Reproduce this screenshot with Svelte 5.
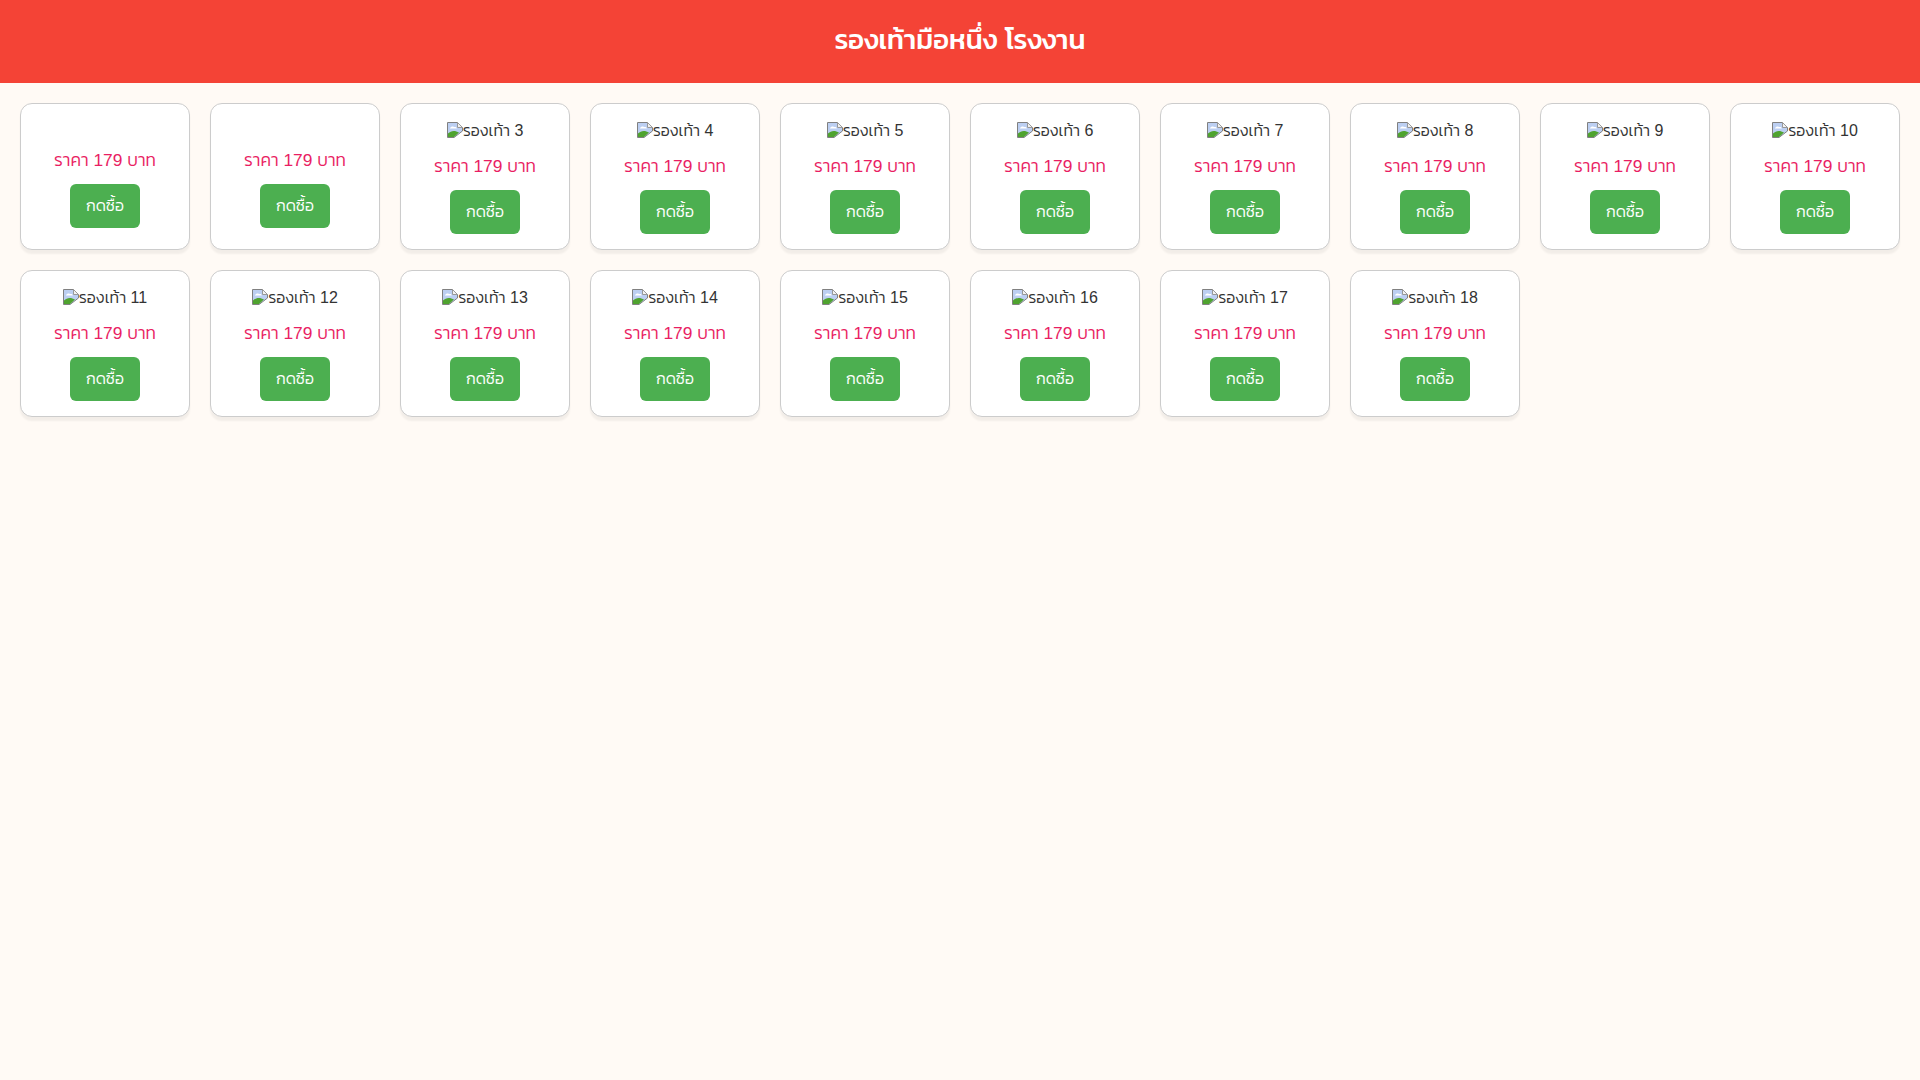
<script lang="ts">
  const shoes = Array.from({ length: 18 }, (_, i) => ({
    id: i + 1,
    // the first two pictures have no alt text showing
    blank: i < 2
  }));
</script>

<header class="header">
  <h1>รองเท้ามือหนึ่ง โรงงาน</h1>
</header>

<main class="grid">
  {#each shoes as shoe (shoe.id)}
    <article class="card">
      {#if shoe.blank}
        <div class="thumb-blank"></div>
      {:else}
        <div class="thumb">
          <svg class="broken" viewBox="0 0 16 16" width="16" height="16" aria-hidden="true">
            <path d="M0.5 15.5V0.5H10.5L15.5 5.5V9L7 15.5Z" fill="#bccff2" stroke="#808080" />
            <path d="M10.5 0.5V5.5H15.5Z" fill="#f2f2f2" stroke="#999" />
            <path d="M3 6.2C3.8 4.4 6 4 7.4 5C8.6 4.6 9.6 5.3 9.9 6.6H3Z" fill="#fff" />
            <path d="M1 15V11.5C4 8.4 8 8 12 10.6L7 15Z" fill="#4fa32f" />
          </svg>รองเท้า {shoe.id}
        </div>
      {/if}
      <p class="price">ราคา 179 บาท</p>
      <button class="buy" type="button">กดซื้อ</button>
    </article>
  {/each}
</main>

<style>
  :global(body) {
    margin: 0;
    min-height: 1080px;
    background: #fffaf5;
    font-family: "Liberation Sans", "Kanit", sans-serif;
    font-weight: 300;
    color: #333;
  }

  .header {
    background: #f44336;
    color: #fff;
    text-align: center;
    padding: 20px 20px 24px;
  }

  .header h1 {
    margin: 0;
    font-size: 27.5px;
    line-height: 39px;
    font-weight: 500;
  }

  .grid {
    display: grid;
    grid-template-columns: repeat(auto-fill, minmax(170px, 1fr));
    gap: 20px;
    padding: 20px;
  }

  .card {
    background: #fff;
    border: 1px solid #ccc;
    border-radius: 12px;
    padding: 15px;
    text-align: center;
    box-shadow: 0 4px 2px rgba(0, 0, 0, 0.05);
  }

  .thumb {
    font-size: 16px;
    line-height: 24px;
    white-space: nowrap;
  }

  .thumb-blank {
    height: 18px;
  }

  .broken {
    vertical-align: -2px;
  }

  .price {
    margin: 11px 0 12px;
    font-size: 17.4px;
    line-height: 24px;
    color: #e91e63;
  }

  .buy {
    width: 70px;
    height: 44px;
    border: none;
    border-radius: 6px;
    background: #4caf50;
    color: #fff;
    font-family: inherit;
    font-weight: inherit;
    font-size: 16px;
    padding: 0 0 2px;
  }
</style>
